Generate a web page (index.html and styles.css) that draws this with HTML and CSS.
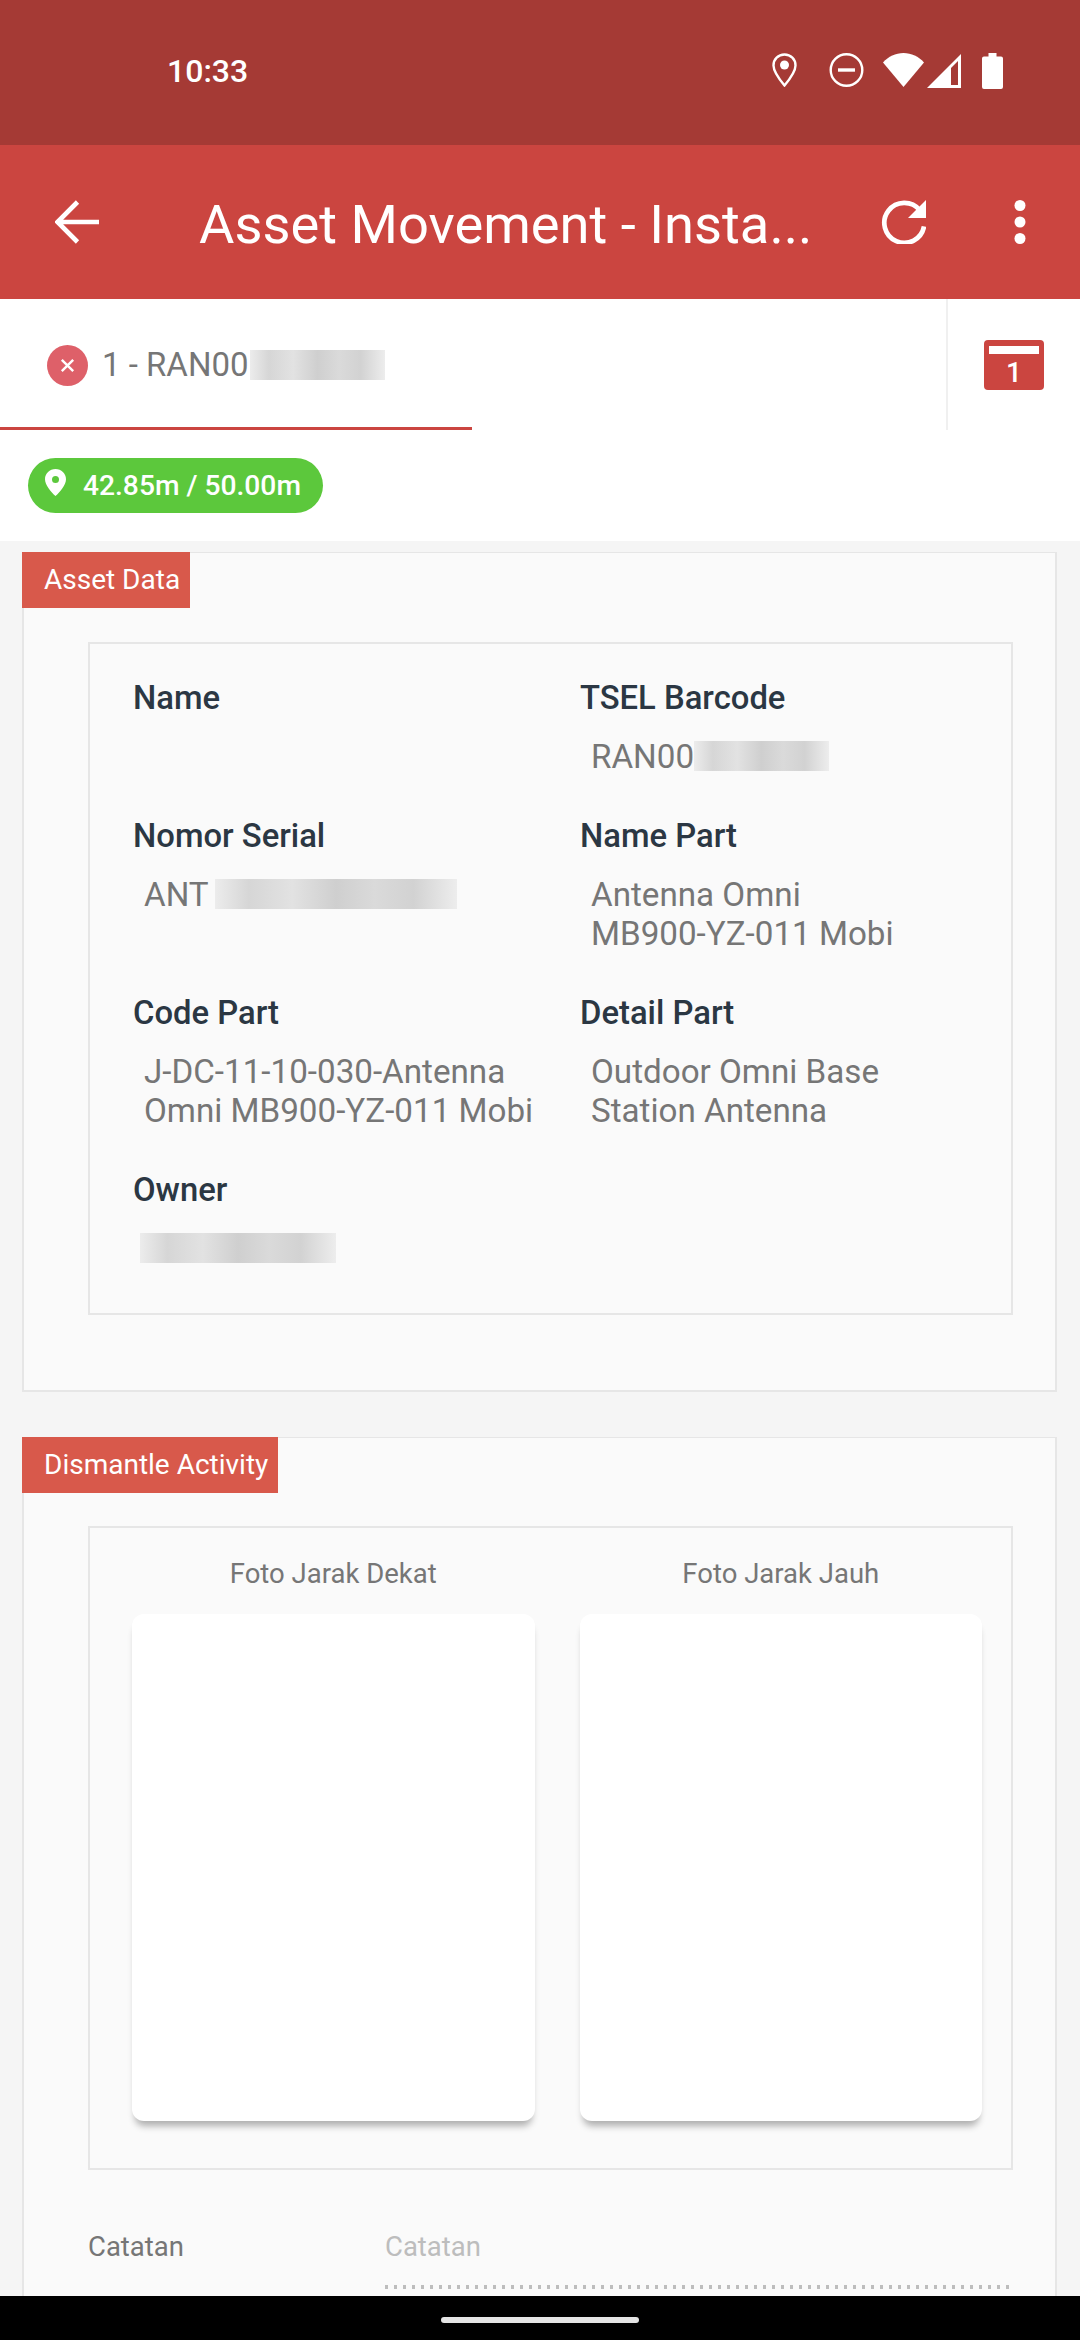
FILE: index.html
```html
<!DOCTYPE html>
<html lang="id">
<head>
<meta charset="utf-8">
<title>Asset Movement</title>
<link rel="stylesheet" href="styles.css">
</head>
<body>
<div class="screen">
  <header class="status">
    <span class="time">10:33</span>
    <div class="status-icons">
      <svg class="i-loc" viewBox="0 0 25 34"><path d="M12.5 1.5C6.2 1.5 1.5 6.4 1.5 12.4c0 6.6 6.5 14.6 11 20 4.500-5.400 11-13.400 11-20 0-6-4.700-10.900-11-10.900z" fill="none" stroke="#fff" stroke-width="2.400"/><circle cx="12.500" cy="12" r="4.500" fill="#fff"/></svg>
      <svg class="i-dnd" viewBox="0 0 35 34"><circle cx="17.500" cy="17" r="15.800" fill="none" stroke="#fff" stroke-width="2.400"/><rect x="9" y="15.300" width="17" height="3.400" fill="#fff"/></svg>
      <svg class="i-wifi" viewBox="0 0 41 34"><path d="M0 9.500C5.500 3.500 12.500 0 20.500 0S35.500 3.500 41 9.500L20.500 34z" fill="#fff"/></svg>
      <svg class="i-sig" viewBox="0 0 34 34"><path d="M34 0v34H0z" fill="#fff"/><path d="M31 7 24 14v17h7z" fill="#a53a35"/></svg>
      <svg class="i-bat" viewBox="0 0 21 36"><path d="M6.500 0h8v3.500h4.500a2 2 0 0 1 2 2V34a2 2 0 0 1-2 2H2a2 2 0 0 1-2-2V5.500a2 2 0 0 1 2-2h4.500z" fill="#fff"/></svg>
    </div>
  </header>

  <nav class="toolbar">
    <svg class="i-back" viewBox="0 0 44 44"><path d="M44 22H3M22.500 2 2.500 22l20 20" fill="none" stroke="#fff" stroke-width="4.600"/></svg>
    <h1 class="title">Asset Movement - Insta...</h1>
    <svg class="i-refresh" viewBox="0 0 45 44"><path d="M38.800 10.200A20 20 0 1 0 43 26.500" fill="none" stroke="#fff" stroke-width="4.700"/><path d="M45 0v18H27z" fill="#fff"/></svg>
    <svg class="i-more" viewBox="0 0 12 44"><circle cx="6" cy="5.500" r="5.500" fill="#fff"/><circle cx="6" cy="22" r="5.500" fill="#fff"/><circle cx="6" cy="38.500" r="5.500" fill="#fff"/></svg>
  </nav>

  <div class="tabs">
    <div class="tab">
      <svg class="i-x" viewBox="0 0 41 41"><circle cx="20.500" cy="20.500" r="20.500" fill="#de6069"/><path d="M14.800 14.800l11.400 11.400M26.200 14.800 14.800 26.200" stroke="#fff" stroke-width="2.400"/></svg>
      <span class="tab-text">1 - RAN00</span>
      <span class="redact r-tab"></span>
    </div>
    <div class="tab-side">
      <div class="cal"><span class="cal-bar"></span><span class="cal-num">1</span></div>
    </div>
  </div>

  <div class="pill-row">
    <div class="pill">
      <svg class="i-pin" viewBox="0 0 21 27"><path fill-rule="evenodd" d="M10.500 0C4.700 0 0 4.500 0 10.200 0 16 6 23 10.500 27 15 23 21 16 21 10.200 21 4.500 16.300 0 10.500 0zm0 7a3.500 3.500 0 1 1 0 7 3.500 3.500 0 0 1 0-7z" fill="#fff"/></svg>
      <span>42.85m / 50.00m</span>
    </div>
  </div>

  <main class="content">
    <section class="card card-asset">
      <div class="card-label">Asset Data</div>
      <div class="inner inner-fields">
        <div class="field"><div class="f-name">Name</div><div class="f-val"></div></div>
        <div class="field"><div class="f-name">TSEL Barcode</div><div class="f-val">RAN00<span class="redact r-bar"></span></div></div>
        <div class="field"><div class="f-name">Nomor Serial</div><div class="f-val">ANT <span class="redact r-serial"></span></div></div>
        <div class="field"><div class="f-name">Name Part</div><div class="f-val">Antenna Omni <span class="nb">MB900-YZ-011 Mobi</span></div></div>
        <div class="field"><div class="f-name">Code Part</div><div class="f-val">J-DC-11-10-030-Antenna <span class="nb">Omni MB900-YZ-011 Mobi</span></div></div>
        <div class="field"><div class="f-name">Detail Part</div><div class="f-val">Outdoor Omni Base Station Antenna</div></div>
        <div class="field"><div class="f-name">Owner</div><div class="f-val"><span class="redact r-owner"></span></div></div>
      </div>
    </section>

    <section class="card card-activity">
      <div class="card-label">Dismantle Activity</div>
      <div class="inner inner-photos">
        <div class="photo-col"><div class="photo-cap">Foto Jarak Dekat</div><div class="photo"></div></div>
        <div class="photo-col"><div class="photo-cap">Foto Jarak Jauh</div><div class="photo"></div></div>
      </div>
      <div class="note">
        <div class="note-label">Catatan</div>
        <div class="note-input">Catatan</div>
      </div>
    </section>
  </main>

  <footer class="navbar"><span class="handle"></span></footer>
</div>
</body>
</html>
```

FILE: styles.css
```css
* { box-sizing: border-box; }
html, body { margin: 0; padding: 0; }
body { font-family: Roboto, "Liberation Sans", sans-serif; background: #f5f5f5; }
svg { display: block; flex: none; }

.screen { width: 1080px; height: 2340px; display: flex; flex-direction: column; overflow: hidden; }

.status { height: 145px; flex: none; background: #a53a35; display: flex; align-items: flex-start; padding: 53px 77px 0 167px; justify-content: space-between; }
.time { color: #fff; font-size: 32px; font-weight: 500; line-height: 36px; margin-top: 0; }
.status-icons { display: flex; align-items: flex-start; }
.i-loc { width: 25px; height: 34px; margin-right: 32px; }
.i-dnd { width: 35px; height: 34px; margin-right: 19px; }
.i-wifi { width: 41px; height: 34px; margin-right: 3px; }
.i-sig { width: 34px; height: 34px; margin-right: 21px; margin-top: 1px; }
.i-bat { width: 21px; height: 36px; }

.toolbar { height: 154px; flex: none; background: #cb4540; display: flex; align-items: flex-start; padding: 55px 0 0 55px; }
.i-back { width: 44px; height: 44px; }
.title { margin: -6px 0 0 100px; width: 616px; font-size: 54.300px; font-weight: 400; line-height: 61px; color: #fff; white-space: nowrap; }
.i-refresh { width: 45px; height: 44px; margin-left: 66px; }
.i-more { width: 12px; height: 44px; margin-left: 88px; }

.tabs { height: 131px; flex: none; background: #fff; display: flex; justify-content: space-between; }
.tab { width: 472px; border-bottom: 3px solid #cb4540; display: flex; align-items: flex-start; padding: 46px 0 0 47px; }
.i-x { width: 41px; height: 41px; }
.tab-text { margin-left: 14px; font-size: 33px; line-height: 40px; color: #767676; }
.r-tab { width: 135px; height: 30px; margin: 5px 0 0 1px; }
.tab-side { width: 134px; border-left: 2px solid #f0f0f0; padding: 41px 0 0 36px; }
.cal { width: 60px; height: 50px; border-radius: 4px; background: #cb4540; display: flex; flex-direction: column; align-items: center; padding-top: 6px; }
.cal-bar { width: 50px; height: 8px; background: #fff; }
.cal-num { color: #fff; font-size: 28px; font-weight: 500; line-height: 30px; margin-top: 4px; }

.pill-row { flex: none; background: #fff; height: 111px; padding: 28px 0 0 28px; }
.pill { width: 295px; height: 55px; border-radius: 28px; background: #5cc83c; color: #fff; display: flex; align-items: center; padding: 0 0 0 17px; font-size: 28.200px; font-weight: 500; }
.pill span { margin-left: 17px; }
.i-pin { width: 21px; height: 27px; margin-top: -7px; }

.content { flex: 1; min-height: 0; overflow: hidden; padding: 11px 23px 0 22px; }

.card { background: #fafafa; border: 2px solid #e6e6e6; border-top-width: 1px; }
.card-asset { height: 840px; }
.card-activity { margin-top: 45px; height: 900px; }
.card-label { width: fit-content; margin: -1px 0 0 -2px; height: 56px; padding: 0 10px 0 22px; background: #d8594b; color: #fff; font-size: 28px; line-height: 56px; }

.inner { margin: 33px 42px 0 64px; border: 2px solid #e6e6e6; }
.inner-fields { height: 673px; margin-top: 34px; display: grid; grid-template-columns: 447px 1fr; grid-auto-rows: min-content; row-gap: 41px; padding: 35px 0 0 43px; }
.f-name { font-size: 32.800px; font-weight: 500; line-height: 39px; color: #2b3743; height: 39px; margin-bottom: 19px; }
.f-val { font-size: 33.200px; line-height: 39px; color: #767676; padding-left: 11px; max-width: 408px; min-height: 39px; }
.nb { white-space: nowrap; }
.redact { display: inline-block; vertical-align: top; background: linear-gradient(90deg, #ececec, #d6d6d6 14%, #e2e2e2 32%, #cfcfcf 50%, #dadada 66%, #d2d2d2 82%, #ededed); }
.r-bar { width: 135px; height: 30px; margin-top: 4px; }
.r-serial { width: 242px; height: 30px; margin-top: 4px; margin-left: -1px; }
.r-owner { width: 196px; height: 30px; margin-top: 4px; margin-left: -4px; }

.inner-photos { height: 644px; margin-top: 33px; display: flex; padding: 29px 29px 0 42px; gap: 45px; }
.photo-col { flex: 1; }
.photo-cap { text-align: center; font-size: 27.500px; line-height: 34px; color: #767676; margin-bottom: 23px; }
.photo { height: 507px; border-radius: 12px; background: #fff; box-shadow: 0 8px 7px -3px rgba(0,0,0,.3); }

.note { display: flex; margin: 60px 42px 0 64px; }
.note-label { width: 297px; font-size: 27.500px; line-height: 34px; color: #767676; }
.note-input { flex: 1; height: 59px; font-size: 27.500px; line-height: 34px; color: #bdbdbd; background: repeating-linear-gradient(90deg, #bdbdbd 0 3px, transparent 3px 9px) left bottom / 625px 4px no-repeat; }

.navbar { height: 44px; flex: none; background: #000; display: flex; justify-content: center; padding-top: 21px; }
.handle { width: 198px; height: 6px; border-radius: 3px; background: #e4e4e4; }
```
